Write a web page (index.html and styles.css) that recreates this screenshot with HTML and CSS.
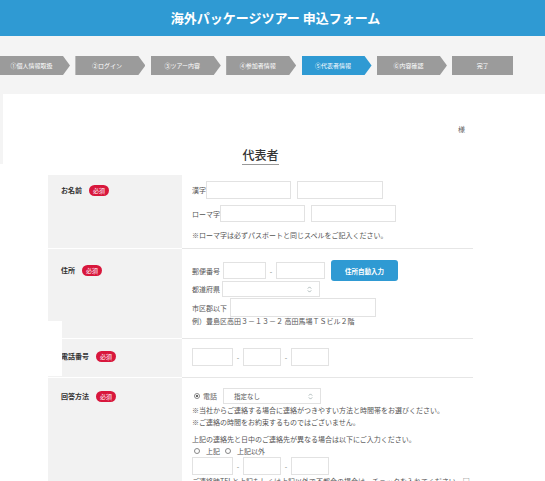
FILE: index.html
```html
<!DOCTYPE html>
<html lang="ja">
<head>
<meta charset="utf-8">
<title>海外パッケージツアー 申込フォーム</title>
<link rel="stylesheet" href="styles.css">
</head>
<body>
<header class="site-header">
  <h1 class="site-title">海外パッケージツアー 申込フォーム</h1>
</header>

<nav class="steps">
  <div class="step">①個人情報取扱</div>
  <div class="step">②ログイン</div>
  <div class="step">③ツアー内容</div>
  <div class="step">④参加者情報</div>
  <div class="step step-active">⑤代表者情報</div>
  <div class="step">⑥内容確認</div>
  <div class="step step-last">完了</div>
</nav>

<section class="intro">
  <div class="intro-inner">
    <div class="honorific">様</div>
    <div class="heading-wrap"><h2 class="heading">代表者</h2></div>
  </div>
</section>

<div class="form-table">
  <div class="row row-name">
    <div class="label-cell"><span class="label">お名前</span><span class="badge">必須</span></div>
    <div class="value-cell">
      <div class="line line-name">
        <span class="field-label">漢字</span><span class="input w85"></span><span class="input w86 ml6"></span>
      </div>
      <div class="line line-roman">
        <span class="field-label">ローマ字</span><span class="input w85 h17 roman1"></span><span class="input w85 h17 ml6"></span>
      </div>
      <p class="note note-roman">※ローマ字は必ずパスポートと同じスペルをご記入ください。</p>
    </div>
  </div>

  <div class="row row-address">
    <div class="label-cell"><span class="label">住所</span><span class="badge">必須</span></div>
    <div class="value-cell">
      <div class="line line-zip">
        <span class="field-label">郵便番号</span><span class="input w43 h17 ml3"></span><span class="dash">-</span><span class="input w49 h17"></span><button class="btn-auto">住所自動入力</button>
      </div>
      <div class="line line-pref">
        <span class="field-label">都道府県</span><span class="select w98 ml2"><span></span><svg class="updown" width="5" height="7" viewBox="0 0 5 7"><path d="M0.8 2.6 L2.5 0.9 L4.2 2.6 M0.8 4.4 L2.5 6.1 L4.2 4.4" fill="none" stroke="#9aa" stroke-width="0.8"/></svg></span>
      </div>
      <div class="line line-city">
        <span class="field-label">市区郡以下</span><span class="input w146 h19 ml3"></span>
      </div>
      <p class="example">例）豊島区高田３－１３－２ 高田馬場ＴＳビル２階</p>
    </div>
  </div>

  <div class="row row-phone">
    <div class="label-cell"><span class="label">電話番号</span><span class="badge">必須</span></div>
    <div class="value-cell">
      <div class="line">
        <span class="input w41"></span><span class="dash">-</span><span class="input w38"></span><span class="dash">-</span><span class="input w38"></span>
      </div>
    </div>
  </div>

  <div class="row row-contact">
    <div class="label-cell"><span class="label">回答方法</span><span class="badge">必須</span></div>
    <div class="value-cell">
      <div class="line line-method">
        <span class="radio radio-on"></span><span class="field-label">電話</span><span class="select w98 ml6"><span>指定なし</span><svg class="updown" width="5" height="7" viewBox="0 0 5 7"><path d="M0.8 2.6 L2.5 0.9 L4.2 2.6 M0.8 4.4 L2.5 6.1 L4.2 4.4" fill="none" stroke="#9aa" stroke-width="0.8"/></svg></span>
      </div>
      <p class="text">※当社からご連絡する場合に連絡がつきやすい方法と時間帯をお選びください。</p>
      <p class="text">※ご連絡の時間をお約束するものではございません。</p>
      <p class="text gap-top">上記の連絡先と日中のご連絡先が異なる場合は以下にご入力ください。</p>
      <div class="line line-choice">
        <span class="radio"></span><span class="field-label">上記</span><span class="radio ml3"></span><span class="field-label">上記以外</span>
      </div>
      <div class="line line-alt">
        <span class="input w41"></span><span class="dash">-</span><span class="input w38"></span><span class="dash">-</span><span class="input w38"></span>
      </div>
      <p class="text">ご連絡時TELと上記もしくは上記以外で不都合の場合は、チェックを入れてください。□</p>
    </div>
  </div>

  <div class="cover"></div>
</div>
</body>
</html>
```

FILE: styles.css
```css
* { box-sizing: border-box; }

html, body {
  margin: 0;
  padding: 0;
  background: #ffffff;
  font-family: "Noto Sans CJK JP", "Noto Sans", sans-serif;
  color: #555;
  overflow: hidden;
}

p { margin: 0; }

.site-header {
  height: 36px;
  background: #2f9ad3;
  display: flex;
  align-items: center;
  justify-content: center;
}

.site-title {
  margin: 0;
  color: #fff;
  font-size: 13px;
  font-weight: 700;
  line-height: 16px;
  padding-left: 6px;
}

.steps {
  background: #f4f4f4;
  height: 58px;
  padding-top: 20px;
  display: flex;
  gap: 5.4px;
}

.step {
  width: 70px;
  height: 19px;
  background: #9b9b9b;
  color: #fff;
  font-size: 6px;
  line-height: 19px;
  text-align: center;
  padding-right: 7px;
  clip-path: polygon(0 0, 63px 0, 70px 50%, 63px 100%, 0 100%);
  white-space: nowrap;
}

.step-active { background: #2f9ad3; }

.step-last {
  width: 61px;
  padding-right: 0;
  clip-path: none;
}

.intro {
  height: 70px;
  border-left: 3px solid #f4f4f4;
  background: #fff;
}

.intro-inner {
  margin-left: 45px;
  width: 425px;
  padding-top: 31px;
}

.honorific {
  font-size: 7px;
  line-height: 8px;
  text-align: right;
  padding-right: 8px;
  color: #666;
}

.heading-wrap {
  text-align: center;
  margin-top: 8px;
}

.heading {
  display: inline-block;
  margin: 0;
  font-size: 12px;
  font-weight: 500;
  line-height: 14px;
  color: #333;
  padding-bottom: 2px;
  border-bottom: 1px solid #999;
}

.form-table {
  position: relative;
  margin-left: 48px;
  width: 425px;
  margin-top: 11px;
}

.row {
  display: flex;
}

.row + .row .value-cell { border-top: 1px solid #e6e6e6; }
.row + .row .label-cell { border-top: 1px solid #fff; }

.label-cell {
  width: 134px;
  flex: none;
  background: #f2f2f2;
  padding: 9px 0 0 13px;
  display: flex;
  align-items: flex-start;
  gap: 7px;
}

.row-address .label-cell { padding-top: 15px; }
.row-phone .label-cell { padding-top: 11px; }
.row-contact .label-cell { padding-top: 12px; }

.label {
  font-size: 7px;
  font-weight: 700;
  line-height: 12px;
  color: #333;
}

.badge {
  display: inline-block;
  background: #d8173c;
  color: #fff;
  font-size: 6px;
  line-height: 11px;
  height: 11px;
  padding: 0 4px;
  border-radius: 6px;
  margin-top: 0.5px;
}

.value-cell {
  flex: 1;
  padding-left: 10px;
  font-size: 7px;
  line-height: 12px;
}

.line {
  display: flex;
  align-items: center;
}

.field-label { white-space: nowrap; }

.input {
  display: inline-block;
  height: 18px;
  border: 1px solid #e2e2e2;
  background: #fff;
  flex: none;
}

.select {
  display: inline-flex;
  align-items: center;
  justify-content: space-between;
  height: 16px;
  border: 1px solid #e2e2e2;
  background: #fff;
  padding: 0 7px 0 10px;
  flex: none;
  font-size: 6.5px;
}

.updown { display: block; }

.h17 { height: 17px; }
.h19 { height: 19px; }
.w38 { width: 38px; }
.w41 { width: 41px; }
.w43 { width: 43px; }
.w49 { width: 49px; }
.w85 { width: 85px; }
.w86 { width: 86px; }
.w98 { width: 98px; }
.w146 { width: 146px; }
.ml2 { margin-left: 2px; }
.ml3 { margin-left: 3px; }
.ml6 { margin-left: 6px; }

.dash {
  width: 10px;
  text-align: center;
  color: #777;
}

.btn-auto {
  margin-left: 6px;
  width: 67px;
  height: 21px;
  border: none;
  border-radius: 3px;
  background: #2f9ad3;
  color: #fff;
  font-family: inherit;
  font-size: 6.5px;
  font-weight: 700;
  padding: 0;
}

/* row 1 */
.row-name .value-cell { padding-top: 6px; padding-bottom: 7px; }
.line-roman { margin-top: 6px; }
.note-roman { margin-top: 7px; }

/* row 2 */
.row-address .value-cell { padding-top: 11px; padding-bottom: 12px; }
.line-zip { height: 21px; }
.line-pref { height: 16px; }
.line-city { margin-top: 1px; }
.example { line-height: 9px; }

/* row 3 */
.row-phone .value-cell { padding-top: 9px; padding-bottom: 11px; }

/* row 4 */
.row-contact { min-height: 120px; }
.row-contact .value-cell { padding-top: 10px; }
.gap-top { margin-top: 5px; }
.line-choice { height: 12px; gap: 3px; }
.line-alt { margin-top: 0; }

.radio {
  width: 6px;
  height: 6px;
  border: 1px solid #888;
  border-radius: 50%;
  margin-right: 3px;
  margin-left: 2px;
  position: relative;
  flex: none;
}

.radio-on::after {
  content: "";
  position: absolute;
  left: 1px;
  top: 1px;
  width: 2px;
  height: 2px;
  border-radius: 50%;
  background: #333;
}

.line-method .field-label { color: #666; }

.cover {
  position: absolute;
  left: 0;
  top: 146px;
  width: 14px;
  height: 55px;
  background: #fff;
}
```
